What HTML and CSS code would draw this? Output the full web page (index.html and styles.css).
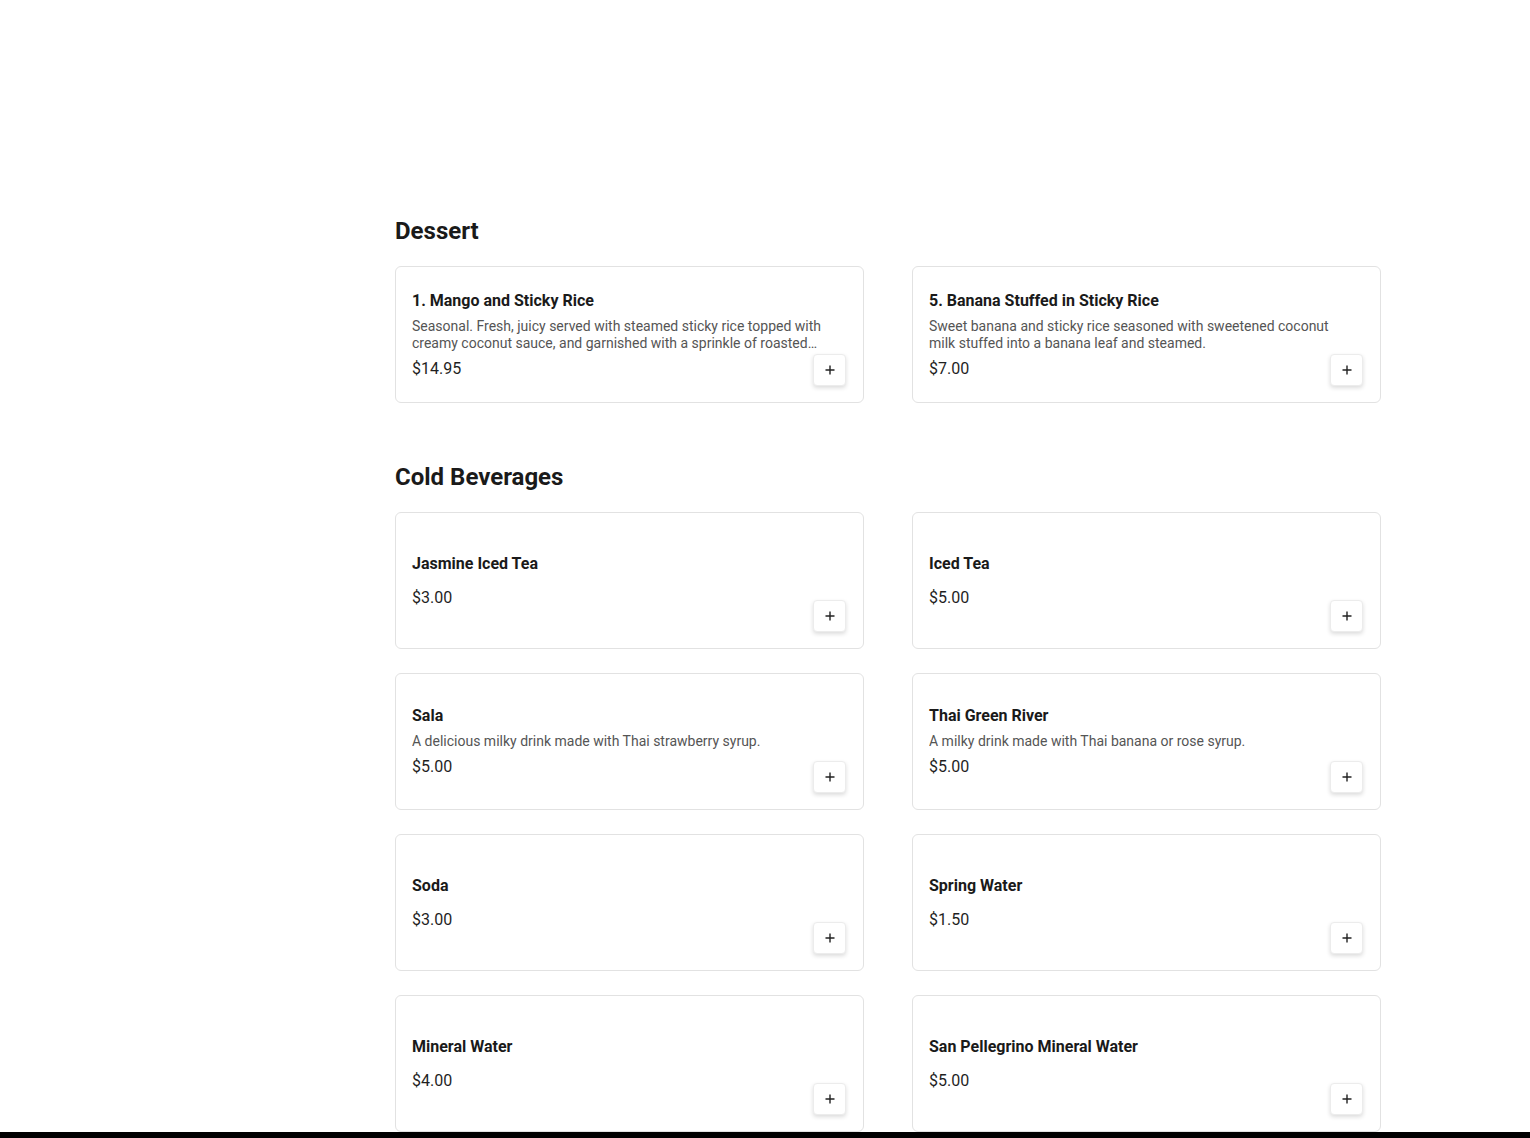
FILE: index.html
```html
<!DOCTYPE html>
<html lang="en">
<head>
<meta charset="utf-8">
<title>Menu</title>
<link rel="stylesheet" href="styles.css">
</head>
<body>
<main class="menu">
  <section class="category">
    <h2 class="category-title">Dessert</h2>
    <div class="items">
      <article class="item">
        <div class="item-body">
          <h3 class="item-name">1. Mango and Sticky Rice</h3>
          <p class="item-desc">Seasonal. Fresh, juicy served with steamed sticky rice topped with creamy coconut sauce, and garnished with a sprinkle of roasted sesame seeds and mung beans.</p>
          <div class="item-price">$14.95</div>
        </div>
        <button class="add-btn" aria-label="Add"><svg viewBox="0 0 12 12" width="12" height="12"><path d="M6 1.5v9M1.5 6h9" stroke="#222" stroke-width="1.4" fill="none"/></svg></button>
      </article>
      <article class="item">
        <div class="item-body">
          <h3 class="item-name">5. Banana Stuffed in Sticky Rice</h3>
          <p class="item-desc">Sweet banana and sticky rice seasoned with sweetened coconut milk stuffed into a banana leaf and steamed.</p>
          <div class="item-price">$7.00</div>
        </div>
        <button class="add-btn" aria-label="Add"><svg viewBox="0 0 12 12" width="12" height="12"><path d="M6 1.5v9M1.5 6h9" stroke="#222" stroke-width="1.4" fill="none"/></svg></button>
      </article>
    </div>
  </section>

  <section class="category">
    <h2 class="category-title">Cold Beverages</h2>
    <div class="items">
      <article class="item">
        <div class="item-body">
          <h3 class="item-name">Jasmine Iced Tea</h3>
          <div class="item-price">$3.00</div>
        </div>
        <button class="add-btn" aria-label="Add"><svg viewBox="0 0 12 12" width="12" height="12"><path d="M6 1.5v9M1.5 6h9" stroke="#222" stroke-width="1.4" fill="none"/></svg></button>
      </article>
      <article class="item">
        <div class="item-body">
          <h3 class="item-name">Iced Tea</h3>
          <div class="item-price">$5.00</div>
        </div>
        <button class="add-btn" aria-label="Add"><svg viewBox="0 0 12 12" width="12" height="12"><path d="M6 1.5v9M1.5 6h9" stroke="#222" stroke-width="1.4" fill="none"/></svg></button>
      </article>
      <article class="item">
        <div class="item-body">
          <h3 class="item-name">Sala</h3>
          <p class="item-desc">A delicious milky drink made with Thai strawberry syrup.</p>
          <div class="item-price">$5.00</div>
        </div>
        <button class="add-btn" aria-label="Add"><svg viewBox="0 0 12 12" width="12" height="12"><path d="M6 1.5v9M1.5 6h9" stroke="#222" stroke-width="1.4" fill="none"/></svg></button>
      </article>
      <article class="item">
        <div class="item-body">
          <h3 class="item-name">Thai Green River</h3>
          <p class="item-desc">A milky drink made with Thai banana or rose syrup.</p>
          <div class="item-price">$5.00</div>
        </div>
        <button class="add-btn" aria-label="Add"><svg viewBox="0 0 12 12" width="12" height="12"><path d="M6 1.5v9M1.5 6h9" stroke="#222" stroke-width="1.4" fill="none"/></svg></button>
      </article>
      <article class="item">
        <div class="item-body">
          <h3 class="item-name">Soda</h3>
          <div class="item-price">$3.00</div>
        </div>
        <button class="add-btn" aria-label="Add"><svg viewBox="0 0 12 12" width="12" height="12"><path d="M6 1.5v9M1.5 6h9" stroke="#222" stroke-width="1.4" fill="none"/></svg></button>
      </article>
      <article class="item">
        <div class="item-body">
          <h3 class="item-name">Spring Water</h3>
          <div class="item-price">$1.50</div>
        </div>
        <button class="add-btn" aria-label="Add"><svg viewBox="0 0 12 12" width="12" height="12"><path d="M6 1.5v9M1.5 6h9" stroke="#222" stroke-width="1.4" fill="none"/></svg></button>
      </article>
      <article class="item">
        <div class="item-body">
          <h3 class="item-name">Mineral Water</h3>
          <div class="item-price">$4.00</div>
        </div>
        <button class="add-btn" aria-label="Add"><svg viewBox="0 0 12 12" width="12" height="12"><path d="M6 1.5v9M1.5 6h9" stroke="#222" stroke-width="1.4" fill="none"/></svg></button>
      </article>
      <article class="item">
        <div class="item-body">
          <h3 class="item-name">San Pellegrino Mineral Water</h3>
          <div class="item-price">$5.00</div>
        </div>
        <button class="add-btn" aria-label="Add"><svg viewBox="0 0 12 12" width="12" height="12"><path d="M6 1.5v9M1.5 6h9" stroke="#222" stroke-width="1.4" fill="none"/></svg></button>
      </article>
    </div>
  </section>
</main>
<div class="bottom-bar"></div>
</body>
</html>
```

FILE: styles.css
```css
* { box-sizing: border-box; }

html, body {
  margin: 0;
  padding: 0;
  background: #ffffff;
  font-family: Roboto, "Liberation Sans", Arial, sans-serif;
  color: #1a1a1a;
}

.menu {
  width: 986px;
  margin-left: 395px;
  padding-top: 214px;
  padding-bottom: 40px;
  display: flex;
  flex-direction: column;
  gap: 57px;
}

.category-title {
  margin: 0 0 18px;
  font-size: 24px;
  line-height: 34px;
  font-weight: 700;
  color: #1a1a1a;
}

.items {
  display: grid;
  grid-template-columns: 1fr 1fr;
  column-gap: 48px;
  row-gap: 24px;
}

.item {
  height: 137px;
  border: 1px solid #e2e2e2;
  border-radius: 6px;
  padding: 16px;
  display: grid;
  grid-template-areas: "stack";
  background: #fff;
}

.item-body {
  grid-area: stack;
  align-self: center;
  padding-right: 16px;
  min-width: 0;
  display: flex;
  flex-direction: column;
}

.item-name {
  margin: 0 0 8px;
  font-size: 16px;
  line-height: 20px;
  font-weight: 700;
  color: #1a1a1a;
}

.item-desc {
  margin: -1px 0 1px;
  font-size: 14px;
  line-height: 17px;
  color: #555555;
  display: -webkit-box;
  -webkit-line-clamp: 2;
  -webkit-box-orient: vertical;
  overflow: hidden;
}

.item-price {
  margin-top: 6px;
  font-size: 16px;
  line-height: 20px;
  color: #1f1f1f;
}

.add-btn {
  grid-area: stack;
  justify-self: end;
  align-self: end;
  width: 33px;
  height: 32px;
  margin-right: 1px;
  padding: 0;
  border: 1px solid #ececec;
  border-radius: 4px;
  background: #fff;
  box-shadow: 0 2px 4px rgba(0, 0, 0, 0.14);
  display: flex;
  align-items: center;
  justify-content: center;
  cursor: pointer;
}

.add-btn svg { display: block; }

.bottom-bar {
  position: fixed;
  left: 0;
  right: 0;
  bottom: 0;
  height: 6px;
  background: #000;
}
```
